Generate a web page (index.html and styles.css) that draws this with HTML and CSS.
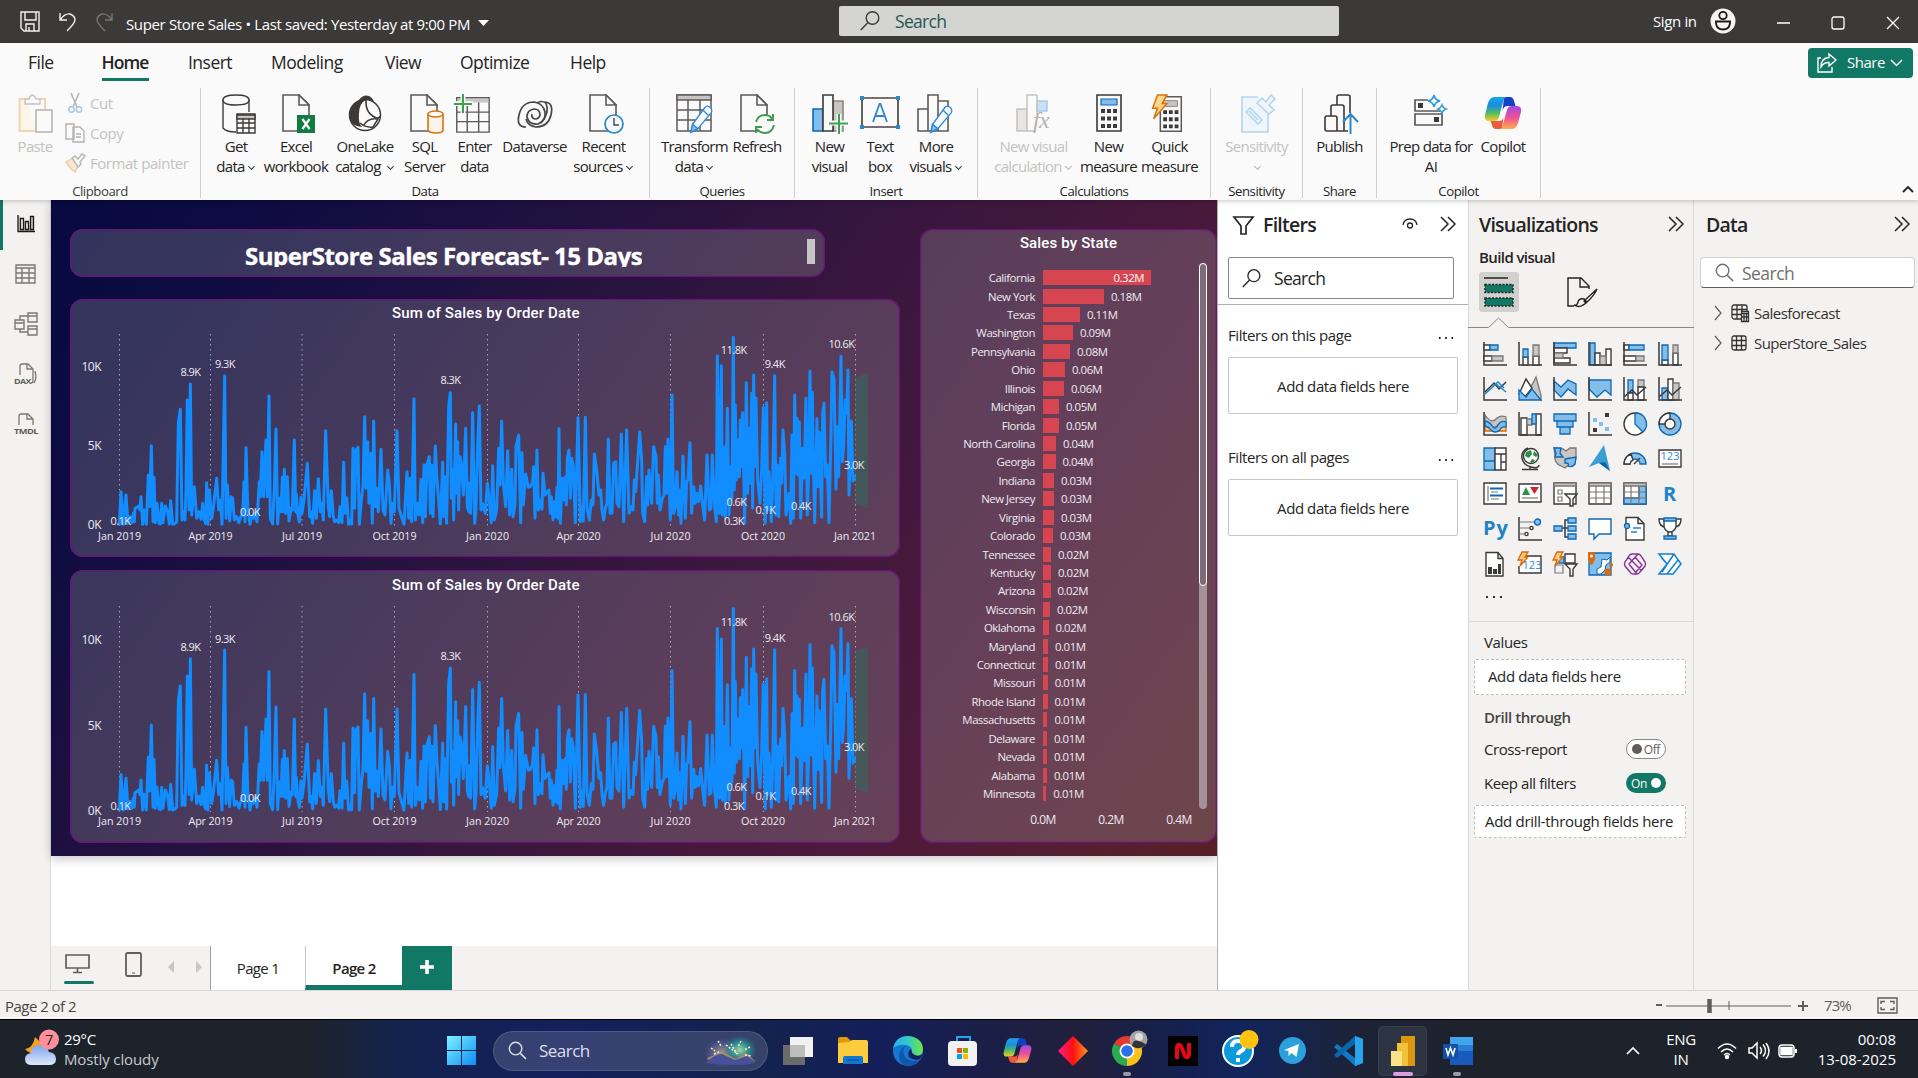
FILE: index.html
```html
<!DOCTYPE html>
<html lang="en">
<head>
<meta charset="utf-8">
<title>Super Store Sales</title>
<link rel="stylesheet" href="styles.css">
</head>
<body>
<svg class="defs" width="0" height="0">
  <defs>
    <linearGradient id="cp1" x1="0" y1="0" x2="0" y2="1"><stop offset="0" stop-color="#1ba3f0"/><stop offset=".35" stop-color="#1a8de0"/><stop offset=".65" stop-color="#4bb96a"/><stop offset="1" stop-color="#f2cf1d"/></linearGradient>
    <linearGradient id="cp2" x1="0" y1="0" x2="0" y2="1"><stop offset="0" stop-color="#a04be0"/><stop offset=".5" stop-color="#ee5096"/><stop offset="1" stop-color="#ffac4a"/></linearGradient>
    <symbol id="copilot" viewBox="0 0 38 34">
      <path d="M20 1h6q3 0 4 4l1.500 5h-8q-4 0-5 5z" fill="#1340c8"/>
      <path d="M18 33h-6q-3 0-4-4l-1.500-4h9q3 0 4-4z" fill="#f0593a"/>
      <path d="M10 1h13q-3 0-4 5l-4 15q-1 4-5 4H5q-5 0-4-6L4 7q2-6 6-6z" fill="url(#cp1)"/>
      <path d="M28 33H15q3 0 4-5l4-14q1-4 5-4h5q5 0 4 6l-3 11q-2 6-6 6z" fill="url(#cp2)"/>
    </symbol>
    <symbol id="page" viewBox="0 0 28 38"><path d="M1 1h16l10 10v26H1z" fill="#fafafa" stroke="#5d5b59" stroke-width="1.600"/><path d="M17 1v10h10z" fill="#fafafa" stroke="#5d5b59" stroke-width="1.600"/></symbol>
    <symbol id="dbl" viewBox="0 0 16 16"><path d="M1 1l7 7-7 7M8 1l7 7-7 7" fill="none" stroke="#252423" stroke-width="1.500"/></symbol>
    <symbol id="lens" viewBox="0 0 20 20"><circle cx="12.500" cy="7" r="6.300" fill="none" stroke="currentColor" stroke-width="1.400"/><path d="M8 11.500L.8 19" stroke="currentColor" stroke-width="1.400"/></symbol>
    <symbol id="lensr" viewBox="0 0 20 20"><circle cx="8" cy="8" r="6.600" fill="none" stroke="currentColor" stroke-width="1.500"/><path d="M13 13l6 6" stroke="currentColor" stroke-width="1.700"/></symbol>
    <symbol id="pencil" viewBox="0 0 26 34"><path d="M2 32l2-9L18 4q3-3 6 0t1 6L10 28z" fill="#fafafa" stroke="#2b88d8" stroke-width="1.500"/><path d="M2 32l2-9 6 5z" fill="#83bdea" stroke="#2b88d8"/><path d="M16 7l6 6" stroke="#2b88d8" stroke-width="1.500"/></symbol>
    <symbol id="dots" viewBox="0 0 18 4"><circle cx="2" cy="2" r="1.100"/><circle cx="9" cy="2" r="1.100"/><circle cx="16" cy="2" r="1.100"/></symbol>
    <polyline id="sales" points="358,973 363,875 370,973 378,885 384,970 390,950 396,968 400,940 403,965 405,925 411,922 416,918 420,930 423,890 428,973 432,930 439,973 445,826 449,920 454,737 459,965 462,832 466,968 471,910 477,970 481,972 485,910 489,968 496,918 503,935 508,972 512,902 518,973 525,970 530,965 535,670 541,628 546,960 550,935 555,960 558,870 562,600 567,930 571,552 575,945 583,860 590,955 597,935 603,958 608,910 613,960 617,970 620,848 624,973 628,870 635,955 640,925 650,835 656,930 662,900 666,973 674,528 678,955 682,855 689,963 694,890 698,895 703,960 710,950 717,968 722,950 728,945 732,845 735,965 738,743 743,920 750,973 754,950 760,955 765,940 771,965 778,845 781,890 786,755 791,890 798,720 802,890 807,588 811,955 818,972 823,865 828,687 833,972 838,895 843,935 847,832 849,935 853,808 857,940 862,830 867,963 873,925 877,930 883,720 887,935 889,882 893,940 898,966 903,892 906,940 912,900 922,790 929,950 933,935 938,970 944,872 949,955 955,836 961,935 965,910 970,960 977,692 985,920 989,950 994,872 1000,950 1004,965 1010,960 1016,968 1020,920 1026,968 1031,787 1035,940 1040,893 1046,973 1052,960 1055,972 1059,745 1064,925 1068,750 1074,742 1078,973 1084,900 1089,860 1094,650 1098,865 1103,725 1107,910 1113,760 1117,970 1121,663 1126,920 1130,865 1135,935 1138,870 1143,748 1149,930 1155,945 1163,810 1168,850 1173,970 1178,910 1183,935 1191,692 1197,925 1203,945 1212,973 1221,815 1226,955 1231,835 1235,965 1242,596 1246,960 1252,910 1258,945 1263,838 1268,968 1272,795 1276,950 1281,793 1288,770 1291,940 1295,795 1299,950 1306,738 1311,840 1316,900 1321,972 1328,787 1331,950 1334,830 1340,970 1346,620 1351,578 1354,895 1358,810 1361,960 1367,672 1369,880 1373,725 1376,930 1380,770 1385,795 1390,885 1397,685 1402,920 1406,935 1408,850 1412,940 1418,638 1424,970 1428,930 1433,735 1438,618 1443,930 1448,912 1456,940 1462,850 1468,900 1474,968 1478,797 1483,960 1490,930 1496,745 1500,855 1505,663 1510,850 1517,920 1523,752 1529,945 1535,808 1539,950 1545,915 1548,740 1556,705 1562,968 1566,758 1570,915 1577,822 1585,862 1591,860 1598,845 1601,800 1605,955 1611,750 1615,930 1621,900 1626,928 1629,820 1635,885 1642,875 1647,870 1651,940 1654,890 1659,960 1663,905 1667,950 1671,862 1674,955 1677,686 1681,970 1687,835 1692,900 1696,830 1699,915 1702,775 1707,750 1711,895 1715,775 1720,800 1726,968 1734,653 1741,965 1745,920 1750,963 1756,652 1761,925 1768,960 1774,900 1779,915 1783,762 1790,810 1797,885 1802,870 1806,930 1811,960 1816,925 1821,910 1825,717 1830,940 1836,940 1841,790 1847,785 1851,910 1857,920 1864,702 1871,965 1880,690 1887,940 1893,920 1899,930 1903,840 1907,875 1919,696 1925,780 1928,940 1934,965 1940,830 1943,915 1947,810 1955,910 1961,740 1968,770 1972,910 1975,825 1980,930 1987,895 1992,885 1996,740 2000,880 2004,717 2011,960 2016,585 2021,940 2026,920 2031,815 2036,945 2039,870 2043,970 2049,768 2056,955 2060,845 2064,840 2070,728 2075,940 2081,860 2086,910 2090,880 2096,905 2102,858 2108,915 2114,960 2121,765 2128,930 2133,925 2137,765 2143,910 2149,965 2152,468 2158,940 2164,497 2167,945 2171,740 2176,955 2182,625 2187,945 2192,800 2196,895 2200,412 2203,870 2206,615 2209,840 2214,720 2218,830 2221,660 2224,800 2228,638 2234,970 2239,548 2243,880 2248,685 2251,850 2255,580 2258,925 2261,525 2264,800 2268,595 2273,840 2280,910 2285,810 2290,622 2296,970 2300,608 2303,930 2307,815 2311,880 2314,965 2318,850 2324,527 2328,945 2332,795 2336,950 2342,775 2345,850 2349,690 2354,760 2358,945 2363,910 2367,880 2372,970 2376,705 2380,955 2384,585 2388,820 2391,655 2394,825 2398,665 2402,955 2408,745 2412,835 2418,595 2422,945 2426,820 2430,513 2434,820 2437,577 2440,780 2444,968 2451,656 2454,860 2458,697 2465,952 2468,640 2472,610 2477,830 2482,795 2487,968 2493,700 2496,516 2502,535 2508,868 2512,680 2516,830 2523,469 2527,785 2531,740 2535,600 2540,640 2544,510 2547,885 2554,663 2559,843 2564,830"/>
  </defs>
</svg>

<header class="titlebar">
  <svg class="tb-icons" width="104" height="22" viewBox="0 0 104 22" fill="none" stroke="#f3f2f1" stroke-width="1.400">
    <path d="M1 1h18v19H4l-3-3zM5 1v8h11V1M6 20v-7h8v7M9 20v-4"/>
    <path d="M40 2v7h7M40 9q5-7 10-6 5 2 5 6 0 3-8 11"/>
    <path d="M92 2v7h-7M92 9q-5-7-10-6-5 2-5 6 0 3 8 11" stroke="#777573"/>
  </svg>
  <span class="doc">Super Store Sales&nbsp;•&nbsp;Last saved: Yesterday at 9:00 PM</span>
  <svg class="caret" width="11" height="6" viewBox="0 0 11 6"><path d="M0 0h11L5.500 6z" fill="#fff"/></svg>
  <div class="top-search"><svg width="20" height="20"><use href="#lens"/></svg><span>Search</span></div>
  <span class="signin">Sign in</span>
  <svg class="avatar" width="26" height="26" viewBox="0 0 26 26"><circle cx="13" cy="13" r="12.500" fill="#f6f5f4"/><g fill="none" stroke="#1b1a19" stroke-width="1.800"><circle cx="13" cy="7.500" r="3.700"/><path d="M6 13.500h14v2q-1 6-7 6t-7-6z"/></g></svg>
  <svg class="win" width="124" height="14" viewBox="0 0 124 14" fill="none" stroke="#fff" stroke-width="1.300"><path d="M0 7h13M110 1l12 12M122 1l-12 12"/><rect x="55" y="1" width="12" height="12" rx="2"/></svg>
</header>

<section class="ribbon">
  <nav class="menu">
    <a class="m1">File</a><a class="m2 on">Home</a><a class="m3">Insert</a><a class="m4">Modeling</a><a class="m5">View</a><a class="m6">Optimize</a><a class="m7">Help</a>
    <button class="share"><svg width="20" height="20" viewBox="0 0 20 20" fill="none" stroke="#fff" stroke-width="1.400"><path d="M4 5H1v14h14v-5M12 1l7 6-7 6V9.500Q7 9 4 14q0-9 8-9.500z"/></svg><span>Share</span><svg width="13" height="8" viewBox="0 0 13 8"><path d="M1 1l5.500 5.500L12 1" fill="none" stroke="#fff" stroke-width="1.500"/></svg></button>
  </nav>
  <div class="groups">
    <div class="grp g-clip dis">
      <div class="btns">
        <div class="btn paste"><svg width="35" height="40" viewBox="0 0 35 40"><path d="M9 5H1.500v32h16" fill="#fdf5e8" stroke="#f0d5ae" stroke-width="2"/><path d="M22 5h5v10" fill="none" stroke="#f0d5ae" stroke-width="2"/><path d="M7 10V5h4q3-8 7 0h4v5z" fill="#fafafa" stroke="#c4c2c0" stroke-width="1.400"/><path d="M18 16h16v22H18z" fill="#fafafa" stroke="#b5b3b1" stroke-width="1.600"/></svg><span>Paste</span></div>
        <div class="mini">
          <div><svg width="20" height="20" viewBox="0 0 20 20" fill="none" stroke-width="1.500"><path d="M6 0l6 14M14 0L8 14" stroke="#b5b3b1"/><circle cx="6.500" cy="16.500" r="2.700" stroke="#a4cbe6"/><circle cx="14" cy="16.500" r="2.700" stroke="#a4cbe6"/></svg>Cut</div>
          <div><svg width="20" height="20" viewBox="0 0 20 20" fill="#fafafa" stroke="#b5b3b1" stroke-width="1.400"><path d="M1 1h8v15H1zM8 4h7l4 4v11H8z"/><path d="M11 11h5M11 14h5"/></svg>Copy</div>
          <div><svg width="20" height="20" viewBox="0 0 20 20" stroke-width="1.400"><path d="M1 9l7-4 6 6-4 8q-5-3-9-10z" fill="#fbe5cd" stroke="#eccaa5"/><path d="M7 5l3-2 3 3 4-5 3 2-5 6 1 2-3 3z" fill="#fafafa" stroke="#b5b3b1"/></svg>Format painter</div>
        </div>
      </div>
      <b>Clipboard</b>
    </div>
    <div class="grp g-data">
      <div class="btns">
        <div class="btn w64 shift"><svg width="34" height="40" viewBox="0 0 34 40" fill="#fafafa" stroke="#3b3a38" stroke-width="1.400"><path d="M1 6v28q3 4 13 4M27 6v12" /><path d="M1 6q0-5 13-5t13 5-13 5T1 6z"/><path d="M15 20h18v19H15z"/><path d="M15 21h18v4H15z" fill="#c8c6c4"/><path d="M15 29h18M15 34h18M21 24v15M27 24v15"/></svg><span>Get<br>data<i></i></span></div>
        <div class="btn w56 shift"><svg width="34" height="40" viewBox="0 0 34 40"><use href="#page" width="28" height="38" x="0" y="0"/><rect x="15" y="21" width="18" height="18" fill="#107c41"/><path d="M20.500 25l7 10M27.500 25l-7 10" stroke="#fff" stroke-width="2.200"/></svg><span>Excel<br>workbook</span></div>
        <div class="btn w82"><svg width="36" height="40" viewBox="0 0 36 40"><circle cx="18" cy="21" r="15.500" fill="#fafafa" stroke="#3b3a38" stroke-width="1.500"/><path d="M12 6q4-6 10-4 4 2 5 6-4-3-8-2-7 3-7 14-1 9 3 13Q2 32 2 20 3 12 12 6z" fill="#3b3a38"/><path d="M19 6q-1 13 10 18 4 0 4-2M13 29q6 5 13 4l5-8q-10-2-15 7" fill="none" stroke="#3b3a38" stroke-width="1.500"/></svg><span>OneLake<br>catalog <i></i></span></div>
        <div class="btn w37 shift"><svg width="34" height="40" viewBox="0 0 34 40"><use href="#page" width="28" height="38" x="0" y="0"/><path d="M18 20v16q1 3 8 3t7-3V20" fill="#fdf3e8" stroke="#d67510" stroke-width="1.600"/><ellipse cx="25.500" cy="20" rx="7.500" ry="3" fill="#fff" stroke="#d67510" stroke-width="1.600"/></svg><span>SQL<br>Server</span></div>
        <div class="btn w63 back"><svg width="38" height="42" viewBox="0 0 38 42" fill="#fafafa" stroke="#5d5b59" stroke-width="1.500"><path d="M3 4h34v36H3z"/><path d="M4 5h32v4H4z" fill="#c8c6c4" stroke="none"/><path d="M3 19h34M3 29h34M14 9v31M26 9v31"/><path d="M0 10h20M9.500 0v20" stroke="#fafafa" stroke-width="5"/><path d="M0 10.500h19M9.500 0v20" stroke="#3ba350" stroke-width="2.200"/></svg><span>Enter<br>data</span></div>
        <div class="btn w57"><svg width="36" height="36" viewBox="0 0 36 40" fill="none" stroke="#484644" stroke-width="1.700"><path d="M9 33Q-1 33 2 21 5 8 17 8q9 1 11 10 1 9-7 12-9 1-11-7 0-7 7-8 6 0 6 6-1 4-5 4-4-1-3-5"/><path d="M27 8q10 0 7 13-3 12-15 12-8-1-10-8M20 9q4-3 9 0 4 10-5 20"/></svg><span>Dataverse</span></div>
        <div class="btn w81 shift"><svg width="35" height="40" viewBox="0 0 35 40"><use href="#page" width="28" height="38" x="0" y="0"/><circle cx="25" cy="30" r="9" fill="#f3f9fd" stroke="#2b88c8" stroke-width="1.700"/><path d="M25 24v7h5" fill="none" stroke="#484644" stroke-width="1.400"/></svg><span>Recent<br>sources<i></i></span></div>
      </div><b>Data</b>
    </div>
    <div class="grp g-query">
      <div class="btns">
        <div class="btn w77"><svg width="38" height="40" viewBox="0 0 38 40" fill="#fafafa" stroke="#5d5b59" stroke-width="1.500"><path d="M1 1h34v36H1z"/><path d="M1 1h34v5H1z" fill="#c8c6c4"/><path d="M1 16h34M1 26h34M12 6v31M24 6v31"/><use href="#pencil" x="11" y="10" width="27" height="30"/></svg><span>Transform<br>data<i></i></span></div>
        <div class="btn w48"><svg width="35" height="40" viewBox="0 0 35 40"><use href="#page" width="28" height="38" x="0" y="0"/><circle cx="25" cy="30" r="9.500" fill="#fafafa"/><path d="M16 28q2-7 9-7 5 0 7 4M34 31q-2 8-9 8-5 0-8-4M33 20v6h-6M16 39v-6h6" fill="none" stroke="#3f9a52" stroke-width="1.900"/></svg><span>Refresh</span></div>
      </div><b>Queries</b>
    </div>
    <div class="grp g-insert">
      <div class="btns">
        <div class="btn w57"><svg width="36" height="40" viewBox="0 0 36 40" stroke-width="1.600"><path d="M1 15h10v22H1z" fill="#83bdea" stroke="#1068b3"/><path d="M21 7h10v30H21z" fill="#c8c6c4" stroke="#8a8886"/><path d="M11 1h10v36H11z" fill="#fafafa" stroke="#3b3a38"/><path d="M17 29h19M27 20v20" stroke="#fafafa" stroke-width="5"/><path d="M17 29.500h19M27 20v20" stroke="#3ba350" stroke-width="2"/></svg><span>New<br>visual</span></div>
        <div class="btn w44"><svg width="40" height="40" viewBox="0 0 40 40"><path d="M2 4h36v29H2z" fill="#fafafa" stroke="#484644" stroke-width="1.700"/><path d="M13 28l6.500-18h1L27 28M15 22h10" fill="none" stroke="#2b88d8" stroke-width="1.800"/><path d="M0 2h4v4H0zM36 2h4v4h-4zM0 31h4v4H0zM36 31h4v4h-4z" fill="#2b88c8"/></svg><span>Text<br>box</span></div>
        <div class="btn w68"><svg width="38" height="40" viewBox="0 0 38 40" fill="#fafafa" stroke="#5d5b59" stroke-width="1.600"><path d="M1 15h10v22H1zM21 7h10v30H21zM11 1h10v36H11z"/><use href="#pencil" x="10" y="10" width="27" height="30"/></svg><span>More<br>visuals<i></i></span></div>
      </div><b>Insert</b>
    </div>
    <div class="grp g-calc">
      <div class="btns">
        <div class="btn w88 dis"><svg width="36" height="40" viewBox="0 0 36 40" stroke="#c4c2c0" stroke-width="1.500"><path d="M1 15h10v22H1z" fill="#e8e6e4"/><path d="M21 7h10v10H21z" fill="#c8e2f5" stroke="#a4cbe6"/><path d="M21 1H11v36h8" fill="#fafafa"/><path d="M21 1v20" /><text x="17" y="34" class="fx">fx</text></svg><span>New visual<br>calculation<i></i></span></div>
        <div class="btn w62"><svg width="26" height="40" viewBox="0 0 26 40"><path d="M1 1h24v36H1z" fill="#fafafa" stroke="#3b3a38" stroke-width="1.600"/><path d="M5 5h16v6H5z" fill="#83bdea" stroke="#1068b3" stroke-width="1.200"/><path d="M5 17h16M5 24.500h16M5 32h16" stroke="#3b3a38" stroke-width="4" stroke-dasharray="4 2"/></svg><span>New<br>measure</span></div>
        <div class="btn w60 back"><svg width="34" height="42" viewBox="0 0 34 42"><path d="M10 3h22v36H10z" fill="#fafafa" stroke="#5d5b59" stroke-width="1.600"/><path d="M13 7h15v6H13z" fill="#c8c6c4" stroke="#8a8886"/><path d="M13 19h16M13 26.500h16M13 34h16" stroke="#3b3a38" stroke-width="4" stroke-dasharray="4 2"/><path d="M7 1h10l-5 9h5L3 26l4-11H2z" fill="#fcd68a" stroke="#d67510" stroke-width="1.600"/></svg><span>Quick<br>measure</span></div>
      </div><b>Calculations</b>
    </div>
    <div class="grp g-sens">
      <div class="btns"><div class="btn dis shift"><svg width="35" height="40" viewBox="0 0 35 40" fill="#eef6fb" stroke="#b4d6ea" stroke-width="1.600"><path d="M27 12v26H1V3h16"/><path d="M5 18l4-4 12 12-4 4z"/><path d="M8 17l9 9" /><path d="M16 9l5-5 4 4 5-7 4 4-6 6 5 5-5 4z"/></svg><span>Sensitivity<br><i></i></span></div></div><b>Sensitivity</b>
    </div>
    <div class="grp g-share">
      <div class="btns"><div class="btn shift"><svg width="35" height="40" viewBox="0 0 35 40" fill="#fafafa" stroke="#3b3a38" stroke-width="1.600"><path d="M13 11V3q0-2 2-2h9q2 0 2 2v16M7 22v-9q0-2 2-2h9q2 0 2 2v24M24 37H3q-2 0-2-2V24q0-2 2-2h8q2 0 2 2v13"/><path d="M26.500 40V20M19 28l7.500-8 7.500 8" fill="none" stroke="#2b88c8" stroke-width="2"/></svg><span>Publish</span></div></div><b>Share</b>
    </div>
    <div class="grp g-cop">
      <div class="btns">
        <div class="btn w96"><svg width="34" height="40" viewBox="0 0 34 40" fill="#fafafa" stroke="#5d5b59" stroke-width="1.700"><path d="M14 6H1v11h25M1 20h27v11H1z"/><path d="M4 9h5v5H4zM20 23h5v5h-5z" fill="#3b3a38" stroke="none"/><path d="M20 1q1 5 6 6-5 1-6 6-1-5-6-6 5-1 6-6zM28 11q1 3 4 4-3 1-4 4-1-3-4-4 3-1 4-4z" stroke="#2b9ad8" stroke-width="1.500"/></svg><span>Prep data for<br>AI</span></div>
        <div class="btn w48"><svg width="40" height="40" viewBox="0 0 40 40"><use href="#copilot" x="1" y="1" width="38" height="36"/></svg><span>Copilot</span></div>
      </div><b>Copilot</b>
    </div>
    <svg class="collapse" width="12" height="8" viewBox="0 0 12 8"><path d="M1 7l5-5 5 5" fill="none" stroke="#252423" stroke-width="1.900"/></svg>
  </div>
</section>

<main class="work">
  <aside class="rail">
    <div class="on"><svg width="18" height="18" viewBox="0 0 18 18" fill="#c8c6c4" stroke="#1b1a19" stroke-width="1.300"><path d="M1 0v16.500h17M3.500 3.500h3v11h-3zM8.500 6.500h3v8h-3zM13.500 1.500h3v13h-3z"/></svg></div>
    <div><svg width="21" height="21" viewBox="0 0 21 21" fill="none" stroke="#7a7876" stroke-width="1.400"><path d="M1 1h19v18H1zM1 4h19M1 9h19M1 14h19M7 4v15M14 4v15"/></svg></div>
    <div><svg width="24" height="24" viewBox="0 0 24 24" fill="none" stroke="#7a7876" stroke-width="1.400"><path d="M1 8h9v9H1zM1 11h9M14 1h9v9h-9zM14 4h9M14 14h9v9h-9zM14 17h9M6 8V4h8M6 17v3h8"/></svg></div>
    <div><svg width="24" height="24" viewBox="0 0 24 24" fill="none" stroke="#7a7876" stroke-width="1.300"><path d="M6 13V4q0-2 2-2h6l5 5v12q0 2-2 2M13 2v5h6M21 9q2 8-1 12"/><text x="0" y="22" class="railtxt" textLength="17" lengthAdjust="spacingAndGlyphs">DAX</text></svg></div>
    <div><svg width="24" height="24" viewBox="0 0 24 24" fill="none" stroke="#7a7876" stroke-width="1.300"><path d="M5 13V4q0-2 2-2h7l5 5v6M13 2v5h6"/><text x="0" y="22" class="railtxt" textLength="24" lengthAdjust="spacingAndGlyphs">TMDL</text></svg></div>
  </aside>

  <section class="stage">
    <div class="report">
      <div class="left">
        <div class="visual heading"><h1>SuperStore Sales Forecast- 15 Days</h1><span class="thumb"></span></div>
        <div class="visual line1">
          <svg width="829" height="258" viewBox="70 299 829 258">
            <text class="vt" x="485.500" y="318" textLength="187">Sum of Sales by Order Date</text>
            <path class="gl" d="M119.500 334v193M210.500 334v193M302 334v193M394.500 334v193M487.500 334v193M578.500 334v193M670.500 334v193M763.500 334v193M855.500 334v193"/>
            <path class="fc" d="M855 377.500l13.300-4.500v135.300l-13.300-4z"/>
            <use class="ln" href="#sales" transform="translate(0 200) scale(.33333)"/>
            <g class="ax end"><text x="101" y="371">10K</text><text x="101" y="450">5K</text><text x="101" y="529">0K</text></g>
            <g class="tk"><text x="119.500" y="540" textLength="43">Jan 2019</text><text x="210.500" y="540" textLength="44">Apr 2019</text><text x="302" y="540" textLength="40">Jul 2019</text><text x="394.500" y="540" textLength="44">Oct 2019</text><text x="487.500" y="540" textLength="43">Jan 2020</text><text x="578.500" y="540" textLength="44">Apr 2020</text><text x="670.500" y="540" textLength="40">Jul 2020</text><text x="763" y="540" textLength="44">Oct 2020</text><text x="855" y="540" textLength="42">Jan 2021</text></g>
            <g class="dl"><text x="190.500" y="376">8.9K</text><text x="225" y="368">9.3K</text><text x="450.500" y="384">8.3K</text><text x="733.700" y="354">11.8K</text><text x="774.800" y="368">9.4K</text><text x="841.500" y="348">10.6K</text><text x="854" y="469">3.0K</text><text x="736.500" y="506">0.6K</text><text x="765.500" y="514">0.1K</text><text x="801" y="510">0.4K</text><text x="734" y="525">0.3K</text><text x="250" y="516">0.0K</text><text x="120.500" y="525">0.1K</text></g>
          </svg>
        </div>
        <div class="visual line2">
          <svg width="829" height="272" viewBox="70 570 829 272">
            <text class="vt" x="485.500" y="590" textLength="187">Sum of Sales by Order Date</text>
            <path class="gl" d="M119.500 606v206M210.500 606v206M302 606v206M394.500 606v206M487.500 606v206M578.500 606v206M670.500 606v206M763.500 606v206M855.500 606v206"/>
            <path class="fc" d="M855 651l13.300-4v146l-13.300-4z"/>
            <use class="ln" href="#sales" transform="translate(0 460.600) scale(.33333 .359)"/>
            <g class="ax end"><text x="101" y="644">10K</text><text x="101" y="730">5K</text><text x="101" y="814.500">0K</text></g>
            <g class="tk"><text x="119.500" y="825" textLength="43">Jan 2019</text><text x="210.500" y="825" textLength="44">Apr 2019</text><text x="302" y="825" textLength="40">Jul 2019</text><text x="394.500" y="825" textLength="44">Oct 2019</text><text x="487.500" y="825" textLength="43">Jan 2020</text><text x="578.500" y="825" textLength="44">Apr 2020</text><text x="670.500" y="825" textLength="40">Jul 2020</text><text x="763" y="825" textLength="44">Oct 2020</text><text x="855" y="825" textLength="42">Jan 2021</text></g>
            <g class="dl"><text x="190.500" y="650.500">8.9K</text><text x="225" y="642.500">9.3K</text><text x="450.500" y="659.500">8.3K</text><text x="733.700" y="625.500">11.8K</text><text x="774.800" y="641.500">9.4K</text><text x="841.500" y="621">10.6K</text><text x="854" y="751">3.0K</text><text x="736.500" y="790.500">0.6K</text><text x="765.500" y="799.500">0.1K</text><text x="801" y="795">0.4K</text><text x="734" y="809.500">0.3K</text><text x="250" y="801.500">0.0K</text><text x="120.500" y="809.500">0.1K</text></g>
          </svg>
        </div>
      </div>
      <div class="visual states">
        <h2>Sales by State</h2>
        <div class="rows">
          <div><span>California</span><s style="width:108px"><em>0.32M</em></s></div>
          <div><span>New York</span><s style="width:61px"></s><em>0.18M</em></div>
          <div><span>Texas</span><s style="width:37px"></s><em>0.11M</em></div>
          <div><span>Washington</span><s style="width:30px"></s><em>0.09M</em></div>
          <div><span>Pennsylvania</span><s style="width:27px"></s><em>0.08M</em></div>
          <div><span>Ohio</span><s style="width:22px"></s><em>0.06M</em></div>
          <div><span>Illinois</span><s style="width:21px"></s><em>0.06M</em></div>
          <div><span>Michigan</span><s style="width:16px"></s><em>0.05M</em></div>
          <div><span>Florida</span><s style="width:16px"></s><em>0.05M</em></div>
          <div><span>North Carolina</span><s style="width:13px"></s><em>0.04M</em></div>
          <div><span>Georgia</span><s style="width:12.500px"></s><em>0.04M</em></div>
          <div><span>Indiana</span><s style="width:11px"></s><em>0.03M</em></div>
          <div><span>New Jersey</span><s style="width:11px"></s><em>0.03M</em></div>
          <div><span>Virginia</span><s style="width:11px"></s><em>0.03M</em></div>
          <div><span>Colorado</span><s style="width:10px"></s><em>0.03M</em></div>
          <div><span>Tennessee</span><s style="width:8px"></s><em>0.02M</em></div>
          <div><span>Kentucky</span><s style="width:8px"></s><em>0.02M</em></div>
          <div><span>Arizona</span><s style="width:7.500px"></s><em>0.02M</em></div>
          <div><span>Wisconsin</span><s style="width:7px"></s><em>0.02M</em></div>
          <div><span>Oklahoma</span><s style="width:5.500px"></s><em>0.02M</em></div>
          <div><span>Maryland</span><s style="width:5px"></s><em>0.01M</em></div>
          <div><span>Connecticut</span><s style="width:5px"></s><em>0.01M</em></div>
          <div><span>Missouri</span><s style="width:4.700px"></s><em>0.01M</em></div>
          <div><span>Rhode Island</span><s style="width:4.500px"></s><em>0.01M</em></div>
          <div><span>Massachusetts</span><s style="width:4.400px"></s><em>0.01M</em></div>
          <div><span>Delaware</span><s style="width:4px"></s><em>0.01M</em></div>
          <div><span>Nevada</span><s style="width:4px"></s><em>0.01M</em></div>
          <div><span>Alabama</span><s style="width:4px"></s><em>0.01M</em></div>
          <div><span>Minnesota</span><s style="width:3.300px"></s><em>0.01M</em></div>
        </div>
        <div class="scale"><span>0.0M</span><span>0.2M</span><span>0.4M</span></div>
        <div class="sbar"><span></span></div>
      </div>
    </div>
    <div class="blank"></div>
  </section>

  <aside class="filters">
    <div class="ph"><svg class="fun" width="21" height="19" viewBox="0 0 21 19"><path d="M1 1h19l-7 9v8H8v-8z" fill="none" stroke="#252423" stroke-width="1.700"/></svg><h3>Filters</h3>
      <svg class="eye" width="16" height="12" viewBox="0 0 16 12" fill="none" stroke="#252423" stroke-width="1.300"><path d="M1 7q1-6 7-6t7 6"/><circle cx="8" cy="7.500" r="2.500"/></svg><svg class="chev" width="16" height="16"><use href="#dbl"/></svg></div>
    <div class="fsearch"><svg width="19" height="19"><use href="#lens"/></svg><span>Search</span></div>
    <div class="fsec"><p>Filters on this page<svg width="16" height="4"><use href="#dots"/></svg></p><div class="drop">Add data fields here</div></div>
    <div class="fsec two"><p>Filters on all pages<svg width="16" height="4"><use href="#dots"/></svg></p><div class="drop">Add data fields here</div></div>
  </aside>

  <aside class="viz">
    <div class="ph"><h3>Visualizations</h3><svg class="chev" width="16" height="16"><use href="#dbl"/></svg></div>
    <h4>Build visual</h4>
    <div class="modes">
      <span class="sel"><svg width="30" height="31" viewBox="0 0 30 31"><path d="M0 1h24" stroke="#252423" stroke-width="1.500"/><path d="M1 7.500h28v8H1zM1 21h28v8H1z" fill="#117865" stroke="#252423" stroke-width="1.500" stroke-dasharray="2 1.500"/></svg></span>
      <svg class="brush" width="31" height="31" viewBox="0 0 31 31" fill="none" stroke="#252423" stroke-width="1.400"><path d="M7 29H1V1h13l8 8v3M13 1v9h9"/><path d="M30 12L17 24l2 2q8-7 11-14zM17 22q-5-1-6 3t-4 3q5 3 9 0 4-2 3-4z"/></svg>
    </div>
    <svg class="notch" width="226" height="11" viewBox="0 0 226 11"><path d="M0 10.500h20.500L30.500 1l10 9.500H226" fill="none" stroke="#8a8886"/></svg>
    <div class="vgrid">
      <svg viewBox="0 0 24 24"><path class="ln0" d="M1 0v23h23"/><path class="w" d="M1 3h6v5H1zM1 14h8v5H1z"/><path class="b" d="M7 3h8v5H7z"/><path class="g" d="M9 14h11v5H9z"/></svg>
      <svg viewBox="0 0 24 24"><path class="ln0" d="M1 0v23h23"/><path class="w" d="M5 15h5v8H5zM15 14h6v9h-6z"/><path class="b" d="M5 7h5v8H5z"/><path class="g" d="M15 3h6v11h-6z"/></svg>
      <svg viewBox="0 0 24 24"><path class="b" d="M1 1h22v5H1z"/><path class="w" d="M1 6h13v5H1zM1 16h16v5H1z"/><path class="g" d="M1 11h9v5H1z"/><path class="ln0" d="M1 0v23h23"/></svg>
      <svg viewBox="0 0 24 24"><path class="b" d="M2 1h5v22H2z"/><path class="w" d="M7 11h5v12H7zM18 7h5v16h-5z"/><path class="g" d="M12 14h6v9h-6z"/><path class="ln0" d="M1 0v23h23"/></svg>
      <svg viewBox="0 0 24 24"><path class="w" d="M1 3h5v5H1zM1 14h12v5H1z"/><path class="b" d="M6 3h15v5H6z"/><path class="g" d="M13 14h8v5h-8z"/><path class="ln0" d="M1 0v23h23"/></svg>
      <svg viewBox="0 0 24 24"><path class="w" d="M4 18h6v5H4zM15 11h5v12h-5z"/><path class="b" d="M4 3h6v15H4z"/><path class="g" d="M15 3h5v8h-5z"/><path class="ln0" d="M1 0v23h23"/></svg>

      <svg viewBox="0 0 24 24"><path class="ln0" d="M1 0v23h23M2 15l9-9 5 6 7-7"/><path class="bl" d="M2 17l11-10 5 4 5 4M10 9l5-4 6 6"/></svg>
      <svg viewBox="0 0 24 24"><path class="g" d="M12 12l6-12 5 18v5z"/><path class="w" d="M1 17L8 2l6 9-8 10z"/><path class="b" d="M1 13l7 7 6-8 9 11H1z"/></svg>
      <svg viewBox="0 0 24 24"><path class="b" d="M1 4l7 6 7-7 8 4v11l-8-6-7 8-7-7z"/><path class="ln0" d="M1 0v23h23"/></svg>
      <svg viewBox="0 0 24 24"><path class="b" d="M1 3h22v15l-6-5-8 7-8-8z"/><path class="ln0" d="M1 0v23h23"/></svg>
      <svg viewBox="0 0 24 24"><path class="b" d="M5 3h5v13H5z"/><path class="g" d="M15 3h6v7h-6z"/><path class="w" d="M5 16h5v7H5zM15 10h6v13h-6z"/><path class="ln0" d="M1 0v23h23M1 20l8-7 5 5 9-8"/></svg>
      <svg viewBox="0 0 24 24"><path class="b" d="M4 11h6v12H4z"/><path class="w" d="M10 2h5v21h-5z"/><path class="g" d="M15 6h6v17h-6z"/><path class="ln0" d="M1 0v23h23M1 20l8-7 5 5 9-8"/></svg>

      <svg viewBox="0 0 24 24"><path class="o" d="M2 12h21v7H2z"/><path class="g" d="M2 3q7 10 12 3 4-3 9-1v6q-7-1-9 3-7 4-12-3z"/><path class="b" d="M2 9q5 1 8 6 3 3 5-2 3-5 8-3v5q-5-1-6 3-5 4-9 0-2-3-6-4z"/><path class="ln0" d="M1 0v23h23"/></svg>
      <svg viewBox="0 0 24 24"><path class="w" d="M3 6h6v17H3zM18 2h5v21h-5z"/><path class="g" d="M9 7h5v6H9z"/><path class="b" d="M14 2h4v10h-4z"/><path class="ln0" d="M1 0v23h23"/></svg>
      <svg viewBox="0 0 24 24"><path class="b" d="M1 2h22v7H1zM4 9h16v6H4zM7 15h10v7H7z"/></svg>
      <svg viewBox="0 0 24 24"><path class="ln0" d="M1 0v23h23"/><path d="M17 1h4v4h-4zM5 16h4v4H5z" fill="#3b3a38"/><path d="M5 6h4v4H5zM11 10h4v4h-4zM17 15h4v4h-4z" fill="#83bdea"/></svg>
      <svg viewBox="0 0 24 24"><circle class="w" cx="12" cy="12" r="11"/><path class="b" d="M12 1a11 11 0 0 1 8 19l-8-8z"/></svg>
      <svg viewBox="0 0 24 24"><circle class="b" cx="12" cy="12" r="11"/><circle class="w" cx="12" cy="12" r="5"/><path class="w" d="M1 12A11 11 0 0 1 12 1v6a5 5 0 0 0-5 5z"/></svg>

      <svg viewBox="0 0 24 24"><path class="b" d="M1 1h11v13H1zM1 14h11v9H1z"/><path class="w" d="M12 1h11v6H12zM12 7h6v16h-6zM18 7h5v8h-5zM18 15h5v8h-5z"/></svg>
      <svg viewBox="0 0 24 24"><path class="ln0" d="M10 1q-7 3-6 10t9 9 8-2M4 22.500h16M12 20v3"/><circle class="w" cx="13" cy="9" r="7.500"/><path d="M8 5l5-2 1 4-3 4-4-2zM16 4l4 4-2 2-3-2zM14 12l3 1-2 3-3-1z" fill="#2d9145"/></svg>
      <svg viewBox="0 0 24 24"><path class="g" d="M1 1l9 1 3 2 4-3h6v9l-1 7-8 2-2 2-4-2q-7-3-6-10z"/><path class="b" d="M1 1h7l-1 5 3 4H2l1-4zM12 12l11-2-1 7q-3 4-7 2 2-3-3-3z"/></svg>
      <svg viewBox="0 0 24 24"><path d="M16-2L1 20l10-4 11 8z" fill="#3a9fd0"/><path d="M11 16l11 8-5-9z" fill="#0f5fa8"/></svg>
      <svg viewBox="0 0 24 24"><path class="b" d="M1 17a11 11 0 0 1 22 0h-6a5 5 0 0 0-10 0z"/><path class="w" d="M1 17a11 11 0 0 1 7-10l2 6a5 5 0 0 0-3 4z"/><path class="ln0" d="M11 17l6-6"/></svg>
      <svg viewBox="0 0 24 24"><path class="w" d="M1 3h22v17H1z"/><path class="gl0" d="M4 17h16"/><text x="12" y="13" class="n123">123</text></svg>

      <svg viewBox="0 0 24 24"><path class="w" d="M1 1h22v21H1z"/><path class="gl0" d="M5 4v15M8 10h7M8 17h8"/><path d="M7 6.500h13M7 13.500h13" stroke="#1068b3" stroke-width="2"/></svg>
      <svg viewBox="0 0 24 24"><path class="w" d="M1 2h22v18H1z"/><path d="M4 13l4-8 4 8z" fill="#2d9145"/><path d="M12 5h9l-4.500 7z" fill="#c8282e"/><path class="gl0" d="M4 16h16"/></svg>
      <svg viewBox="0 0 24 24"><path class="w" d="M1 1h22v21H1z"/><path class="g" d="M1 1h22v3H1z"/><path class="gl0" d="M5 8h4v4H5zM5 15h4v4H5z"/><path class="w" d="M12 12h12l-4 5v7h-3v-7z"/></svg>
      <svg viewBox="0 0 24 24"><path class="w" d="M1 1h22v21H1z"/><path class="g" d="M1 1h22v3H1z"/><path class="gl0" d="M1 10h22M1 16h22M8 4v18M16 4v18"/></svg>
      <svg viewBox="0 0 24 24"><path class="w" d="M1 1h22v21H1z"/><path class="b" d="M16 4h7v18H1v-6h15z"/><path class="g" d="M1 1h22v3H1z"/><path class="gl0" d="M1 10h22M1 16h22M8 4v18M16 4v18"/></svg>
      <svg viewBox="0 0 24 24"><text x="11" y="19" class="rt">R</text></svg>

      <svg viewBox="0 0 24 24"><text x="12" y="18" class="rt" textLength="24">Py</text></svg>
      <svg viewBox="0 0 24 24"><path class="ln0" d="M1 0v23h23"/><path class="gl0" d="M1 5h16M1 11h11M1 17h6"/><circle class="b" cx="19.500" cy="5" r="3"/><circle class="w" cx="13.500" cy="11" r="1.600"/><circle class="w" cx="8.500" cy="17" r="1.600"/></svg>
      <svg viewBox="0 0 24 24"><path class="ln0" d="M8 11h7M15 3h-3v17h3"/><path class="b" d="M1 9h8v5H1zM15 1h8v5h-8zM15 9h8v5h-8zM15 17h8v5h-8z"/></svg>
      <svg viewBox="0 0 24 24"><path d="M1 2h22v15H11l-5 5v-5H1z" fill="#fff" stroke="#1068b3" stroke-width="1.400"/></svg>
      <svg viewBox="0 0 24 24"><path class="w" d="M3 0.500h12l6 6V23H3zM15 .5v6h6"/><path class="bl" d="M10 11h8M8 15h6"/><circle class="b" cx="4" cy="9" r="2.500"/></svg>
      <svg viewBox="0 0 24 24"><path class="w" d="M6 2H1q0 8 7 8M18 2h5q0 8-7 8"/><path class="w" d="M6 2h12v8q-2 5-6 5t-6-5zM10 15h4v4h-4z"/><path class="b" d="M6 1h12v3H6zM6 19h12v3H6z"/></svg>

      <svg viewBox="0 0 24 24"><path class="w" d="M3 0.500h12l5 6V24H3zM15 .5v6h5"/><path d="M5 15h4v7H5zM10 17h4v5h-4zM15 12h3v10h-3z" fill="#3b3a38"/></svg>
      <svg viewBox="0 0 24 24"><path class="w" d="M7 4h16v17H1v-7"/><text x="14" y="17" class="n123">123</text><path class="o" d="M4 0h6L7 5h3l-8 9 2-6H0z"/></svg>
      <svg viewBox="0 0 24 24"><path class="w" d="M12 2h10v9H12z"/><path class="gl0" d="M2 13h8v8H2z"/><path class="b" d="M6 5h5v6H6z"/><path class="w" d="M12 12h12l-4 5v7h-3v-7z"/><path class="o" d="M4 0h6L7 5h3l-8 9 2-6H0z"/></svg>
      <svg viewBox="0 0 24 24"><path class="b" d="M1 1h22v22H1z"/><path d="M9 22v-5l4-2 1-8 5 1 3-3v5l-4 3-1 5-4 4z" fill="#fff" stroke="#1068b3"/><path d="M0 0h7v7q-1 4-3.500 6Q1 11 0 7z" fill="#d86a10"/><circle cx="3.500" cy="4" r="1.500" fill="#fff"/><circle cx="20" cy="20" r="3.500" fill="#d86a10"/><circle cx="23" cy="13" r="2" fill="#d86a10"/></svg>
      <svg viewBox="0 0 24 24" fill="none" stroke="#8a2f9a" stroke-width="1.400"><path d="M9 2h6q2 0 3 2l4 6q1 2 0 4l-5 6q-1 2-3 2h-4q-2 0-3-2l-5-6q-1-2 0-4l4-6q1-2 3-2zM15 2l-9 10 8 10M5 5l13 13M12 5l7 8-6 7"/></svg>
      <svg viewBox="0 0 24 24" fill="#fff" stroke="#1180d8" stroke-width="1.500"><path d="M1 2h15l7 10-8 10H1l8-10zM16 2L4 20M20 8L9 22M9 12L3 5"/></svg>
      <svg viewBox="0 0 24 24"><use href="#dots" x="2" y="8" width="18" height="4"/></svg>
    </div>
    <div class="wells">
      <p>Values</p>
      <div class="well">Add data fields here</div>
      <h5>Drill through</h5>
      <div class="tog">Cross-report<span class="off"><i></i>Off</span></div>
      <div class="tog k">Keep all filters<span class="ont">On<i></i></span></div>
      <div class="well d">Add drill-through fields here</div>
    </div>
  </aside>

  <aside class="data">
    <div class="ph"><h3>Data</h3><svg class="chev" width="16" height="16"><use href="#dbl"/></svg></div>
    <div class="dsearch"><svg width="19" height="19"><use href="#lensr"/></svg><span>Search</span></div>
    <div class="tbl"><svg width="8" height="14" viewBox="0 0 8 14"><path d="M1 0l6 7-6 7" fill="none" stroke="#605e5c" stroke-width="1.200"/></svg><svg width="19" height="19" viewBox="0 0 19 19" fill="none" stroke="#323130" stroke-width="1.300"><rect x="1" y="1" width="15" height="14" rx="2"/><path d="M1 5.500h15M1 10.500h9M6 1v14M11 1v6"/><path d="M10.500 7.500h7v10h-7z" fill="#f3f2f1"/><path d="M11 9.500h7M13 10v7M15.500 10v7M11 13h7" /></svg>Salesforecast</div>
    <div class="tbl"><svg width="8" height="14" viewBox="0 0 8 14"><path d="M1 0l6 7-6 7" fill="none" stroke="#605e5c" stroke-width="1.200"/></svg><svg width="19" height="19" viewBox="0 0 19 19" fill="none" stroke="#323130" stroke-width="1.300"><rect x="1" y="2" width="14" height="14" rx="2"/><path d="M1 6.500h14M1 11.500h14M5.500 2v14M10.500 2v14"/></svg>SuperStore_Sales</div>
  </aside>

  <div class="pages">
    <svg width="159" height="36" viewBox="0 0 159 36"><path d="M15 9h23v13H15zM26.500 22v4M22 26.500h9" fill="none" stroke="#605e5c" stroke-width="1.700"/><rect x="13" y="35" width="30" height="3" rx="1.500" fill="#117865"/><rect x="75" y="7" width="15" height="23" rx="1.500" fill="none" stroke="#605e5c" stroke-width="1.800"/><path d="M81 27h3" stroke="#605e5c"/><path d="M123 15v12l-6-6zM145 15v12l6-6z" fill="#c8c6c4"/></svg>
    <span class="pg">Page 1</span><span class="pg cur">Page 2</span><span class="add"><svg width="14" height="14" viewBox="0 0 14 14"><path d="M7 0v14M0 7h14" stroke="#fff" stroke-width="3.600"/></svg></span>
  </div>
</main>

<footer class="status"><span>Page 2 of 2</span>
  <svg width="155" height="16" viewBox="0 0 155 16" fill="none" stroke="#605e5c"><path d="M1 7h6" stroke-width="2"/><path d="M11 8h125M74 3v9"/><path d="M54.500 1v14" stroke-width="4.500"/><path d="M143 8h10M148 3v10" stroke-width="2"/></svg>
  <span class="pct">73%</span>
  <svg class="fit" width="21" height="17" viewBox="0 0 21 17" fill="none" stroke="#605e5c" stroke-width="1.400"><path d="M1 1h19v15H1z"/><path d="M8 4.500H4V7M13 4.500h4V7M8 12.500H4V10M13 12.500h4V10"/></svg>
</footer>

<footer class="taskbar">
  <svg class="wx" width="34" height="40" viewBox="0 0 34 40"><defs><linearGradient id="cl" x1="0" y1="0" x2="0" y2="1"><stop offset="0" stop-color="#79a5ee"/><stop offset="1" stop-color="#dfe9fb"/></linearGradient></defs><path d="M10 8q4 4 8 7l-6 10q-8 0-12-5 8-1 10-12z" fill="#f2a01e"/><path d="M7 36q-7 0-7-6 0-5 6-6 1-8 9-8 7 0 9 7 7 1 7 7 0 6-7 6z" fill="url(#cl)"/><circle cx="24" cy="10.500" r="10" fill="#ff8f9b"/><text x="24" y="15.500" class="badge">7</text></svg>
  <div class="wtext"><span>29°C</span><span>Mostly cloudy</span></div>
  <svg class="start" width="29" height="29" viewBox="0 0 29 29"><defs><linearGradient id="wn" x1="0" y1="0" x2="1" y2="1"><stop offset="0" stop-color="#7df3ff"/><stop offset="1" stop-color="#0a8cf5"/></linearGradient></defs><path d="M0 0h14v14H0zM15 0h14v14H15zM0 15h14v14H0zM15 15h14v14H15z" fill="url(#wn)"/></svg>
  <div class="tsearch"><svg width="19" height="19"><use href="#lensr"/></svg><span>Search</span>
    <svg class="art" width="52" height="30" viewBox="0 0 52 30"><defs><radialGradient id="fa"><stop offset="0" stop-color="#a8a078"/><stop offset=".5" stop-color="#6a6a98" stop-opacity=".8"/><stop offset="1" stop-color="#4a55a0" stop-opacity="0"/></radialGradient><radialGradient id="fb"><stop offset="0" stop-color="#a5d8a0"/><stop offset=".5" stop-color="#2d9c98" stop-opacity=".8"/><stop offset="1" stop-color="#207a90" stop-opacity="0"/></radialGradient></defs><ellipse cx="17" cy="17" rx="18" ry="15" fill="url(#fa)"/><ellipse cx="35" cy="14" rx="17" ry="15" fill="url(#fb)"/><path d="M2 22l15-6 14 7 10-6 9 8-6 2H6z" fill="#b08a60"/><path d="M0 27q10-9 17-9l13 6 12-4 9 6q-10 4-25 3z" fill="#47509c"/><path d="M6 12l4 3M13 5l3 5M36 5l-3 6M45 11l-6 3M21 9l12 9M9 18l5-2M26 8l6 10M40 19l7 1" stroke="#fff3d8" stroke-width="1.500" stroke-dasharray="2 1.500"/></svg></div>
  <div class="apps">
    <span><svg width="30" height="28" viewBox="0 0 30 28"><path d="M0 8h22v20H0z" fill="#6b6b6b"/><path d="M7 0h23v20H7z" fill="#f1f1f1"/><path d="M7 8h15v12H7z" fill="#bdbdbd"/></svg></span>
    <span><svg width="30" height="27" viewBox="0 0 30 27"><path d="M0 2q0-2 2-2h7l4 4h8v8H0z" fill="#e09a05"/><path d="M0 6l11-1 3-2h14q2 0 2 2v21H0z" fill="#fdcb3e"/><path d="M5 27v-6q0-2 2-2h16q2 0 2 2v6z" fill="#0f78d0"/><path d="M9 23h12" stroke="#0a4a90"/></svg></span>
    <span><svg width="30" height="30" viewBox="0 0 30 30"><defs><linearGradient id="eg"><stop offset="0" stop-color="#2ab0e8"/><stop offset=".5" stop-color="#35c9c8"/><stop offset="1" stop-color="#70e83c"/></linearGradient></defs><circle cx="15" cy="15" r="15" fill="#1079d4"/><path d="M0 13Q2 0 16 0q14 2 14 14-1 6-7 6-5 0-4-3 1-7-6-8Q4 8 0 13z" fill="url(#eg)"/><path d="M13 10q-5 4-1 11 5 6 15 3-5 7-14 6-7-3-7-11 1-7 7-9z" fill="#1158a8"/><path d="M18 13q-4 2-2 8 5 4 11 2l3-5q-4 3-8 1t-4-6z" fill="#161f58"/></svg></span>
    <span><svg width="30" height="30" viewBox="0 0 30 30"><path d="M9 6V1h13v5" fill="none" stroke="#1ea5ee" stroke-width="2"/><rect y="5" width="29" height="25" rx="4" fill="#f2f2f2"/><path d="M9 12h5v5H9z" fill="#f25022"/><path d="M15 12h5v5h-5z" fill="#7fba00"/><path d="M9 18h5v5H9z" fill="#00a4ef"/><path d="M15 18h5v5h-5z" fill="#ffb900"/></svg></span>
    <span><svg width="29" height="27"><use href="#copilot"/></svg></span>
    <span><svg width="30" height="30" viewBox="0 0 30 30"><defs><linearGradient id="di"><stop offset="0" stop-color="#ff1a8c"/><stop offset=".5" stop-color="#ff1010"/><stop offset="1" stop-color="#ff9a1a"/></linearGradient></defs><path d="M15 0l15 15-15 15L0 15z" fill="url(#di)"/></svg></span>
    <span class="run lift"><svg width="36" height="36" viewBox="0 0 36 36"><path d="M15 21L2 13.500A15 15 0 0 1 28 13.500z" fill="#e33b2e"/><path d="M15 21L28 13.500A15 15 0 0 1 15 36z" fill="#fbc116"/><path d="M15 21v15A15 15 0 0 1 2 13.500z" fill="#2da94f"/><circle cx="15" cy="21" r="7.500" fill="#fff"/><circle cx="15" cy="21" r="5.800" fill="#2a70e8"/><circle cx="26.500" cy="9.500" r="9" fill="#a5a5a5"/><circle cx="27" cy="7" r="4" fill="#ddd"/><path d="M20 16q1-7 7-5t7 4q-7 6-14 1z" fill="#333"/></svg></span>
    <span><svg width="30" height="30" viewBox="0 0 30 30"><path d="M0 0h30v30H0z" fill="#000"/><path d="M9 23V11q1-4 4-1l4 10q3 3 4-1V7" fill="none" stroke="#e50914" stroke-width="4"/></svg></span>
    <span class="lift"><svg width="38" height="36" viewBox="0 0 38 36"><circle cx="17" cy="21" r="15" fill="#0a9bdc" stroke="#fff" stroke-width="2"/><path d="M11 17q0-6 6-6t6 6q0 3-3 4-3 2-3 4M17 28v4" fill="none" stroke="#fff" stroke-width="4"/><circle cx="28" cy="9.500" r="9.500" fill="#ffc20e"/></svg></span>
    <span><svg width="27" height="27" viewBox="0 0 27 27"><circle cx="13.500" cy="13.500" r="13.500" fill="#2ba0db"/><path d="M5 13l15-6-2.500 13-5-4-3 3v-5z" fill="#fff"/></svg></span>
    <span><svg width="30" height="30" viewBox="0 0 30 30"><path d="M22 0l8 3v24l-8 3L1 11l3-3 18 14z" fill="#1478c4"/><path d="M22 8L4 22l-3-3L22 0z" fill="#0a66ad"/><path d="M22 0l8 3v24l-8 3z" fill="#2aa5ec"/></svg></span>
    <span class="act"><svg width="24" height="30" viewBox="0 0 24 30"><path d="M14 0h10v30H10V0z" fill="#d9980f"/><path d="M6 7h11v23H6z" fill="#f0c23a"/><path d="M0 15h11v15H0z" fill="#fbe38a"/></svg></span>
    <span class="run"><svg width="30" height="28" viewBox="0 0 30 28"><path d="M7 0h23v9H7z" fill="#41a5ee"/><path d="M7 8h23v7H7z" fill="#2b7cd3"/><path d="M7 14h23v14H7z" fill="#185abd"/><rect y="7" width="15" height="15" rx="1" fill="#1450a8"/><path d="M3 11l2 7 2.500-7 2.500 7 2-7" fill="none" stroke="#fff" stroke-width="1.600"/></svg></span>
  </div>
  <svg class="up" width="14" height="9" viewBox="0 0 14 9"><path d="M1 8l6-6 6 6" fill="none" stroke="#fff" stroke-width="1.700"/></svg>
  <div class="lang"><span>ENG</span><span>IN</span></div>
  <svg class="tray" width="80" height="18" viewBox="0 0 80 18" fill="none" stroke="#fff" stroke-width="1.500"><path d="M1 6.500q9-9 18 0M4 10q6-6 12 0M7 13q3-3 6 0"/><circle cx="10" cy="15" r="1.500" fill="#fff"/><path d="M32 6h3l5-5v15l-5-5h-3zM43 5q3 3.500 0 7M46 2.500q5 6 0 12M49 1q6 8 0 16"/><rect x="62" y="3" width="15" height="12" rx="3"/><path d="M64 5.500h11v7H64z" fill="#fff"/><path d="M79 7v4" stroke-width="2"/></svg>
  <div class="clock"><span>00:08</span><span>13-08-2025</span></div>
</footer>
</body>
</html>
```
FILE: styles.css
```css
* { box-sizing: border-box; }
body { margin: 0; width: 1918px; height: 1078px; overflow: hidden; display: flex; flex-direction: column; font-family: "Open Sans", "Noto Sans", sans-serif; font-size: 15px; letter-spacing: -0.03em; color: #252423; background: #f3f2f1; }
h1, h2, h3, h4, h5, p { margin: 0; }
svg { display: block; flex: none; overflow: visible; }
.defs { position: absolute; }
span, a { white-space: nowrap; }

/* title bar */
.titlebar { height: 43px; flex: none; background: #3b3a38; color: #fff; display: flex; align-items: center; padding-left: 20px; }
.tb-icons { margin-right: 2px; }
.doc { width: 343px; padding-top: 5px; letter-spacing: -0.024em; }
.caret { margin-left: 9px; margin-top: 2px; }
.top-search { margin-left: 350px; width: 500px; height: 30px; margin-top: -1px; background: #d4d4d2; border-radius: 2px; display: flex; align-items: center; padding-left: 21px; gap: 15px; font-size: 17.500px; color: #24584e; letter-spacing: -0.04em; }
.top-search svg { color: #3b3a38; }
.signin { margin-left: 314px; width: 46px; margin-top: -2px; letter-spacing: -0.025em; }
.avatar { margin-left: 11px; margin-top: -1px; }
.win { margin-left: 41px; margin-top: 3px; }

/* ribbon */
.ribbon { height: 157px; flex: none; background: #fafafa; box-shadow: 0 1px 5px rgba(0,0,0,.22); position: relative; z-index: 2; }
.menu { display: flex; height: 45px; padding-left: 28px; font-size: 17.500px; position: relative; letter-spacing: -0.03em; }
.menu a { height: 38px; line-height: 39px; }
.m1 { width: 73.500px; } .m2 { width: 47.500px; margin-right: 39px; } .m3 { width: 83px; } .m4 { width: 114px; } .m5 { width: 75px; } .m6 { width: 110px; } .m7 { width: 40px; }
.menu .on { font-weight: 600; letter-spacing: -0.055em; border-bottom: 3px solid #117865; }
.share { margin: 5px 5px 0 auto; width: 105px; height: 30px; border: 0; border-radius: 4px; background: #117865; color: #fff; font: inherit; font-size: 15px; letter-spacing: -0.03em; display: flex; align-items: center; padding: 0 10px 0 9px; justify-content: space-between; }
.share span { margin: -2px 0 0 5px; }
.groups { display: flex; height: 110px; position: relative; }
.grp { border-right: 1px solid #d2d0ce; display: flex; flex-direction: column; justify-content: space-between; }
.grp b { font-weight: 400; font-size: 13.200px; text-align: center; line-height: 14px; letter-spacing: -0.035em; }
.btns { display: flex; justify-content: center; }
.btn { display: flex; flex-direction: column; align-items: center; text-align: center; line-height: 20px; padding-top: 6px; letter-spacing: -0.045em; flex: none; }
.btn svg { height: 40px; margin-bottom: 2px; }
.shift svg { margin-left: 5px; }
.back svg { margin-right: 5px; }
.btn i { display: inline-block; width: 5px; height: 5px; border: solid #3b3a38; border-width: 0 1.700px 1.700px 0; transform: rotate(45deg); margin: 0 2px 3px 4px; }
.dis { color: #c4c2c0; }
.dis b { color: #3b3a38; }
.dis i { border-color: #b5b3b1; }
.fx { font: italic 24px "Liberation Serif", serif; fill: #b5b3b1; stroke: none; }
.w37 { width: 37px; } .w44 { width: 44px; } .w48 { width: 48px; } .w56 { width: 56px; } .w57 { width: 57px; } .w60 { width: 60px; } .w62 { width: 62px; } .w63 { width: 63px; } .w64 { width: 64px; } .w68 { width: 68px; } .w77 { width: 77px; } .w81 { width: 81px; } .w82 { width: 82px; } .w88 { width: 88px; } .w96 { width: 96px; }
.g-clip { width: 201px; }
.g-clip .btns { justify-content: flex-start; padding-left: 16px; }
.paste { width: 38px; }
.mini { margin: 0 0 0 11px; }
.mini div { display: flex; align-items: center; height: 30px; gap: 5px; white-space: nowrap; }
.g-data { width: 449px; } .g-query { width: 145px; } .g-insert { width: 183px; } .g-calc { width: 233px; } .g-calc .btns { padding-left: 1px; } .g-sens { width: 92px; } .g-share { width: 74px; } .g-cop { width: 164px; }
.g-data .btns, .g-query .btns, .g-insert .btns, .g-cop .btns { justify-content: flex-start; }
.g-data .btns { padding-left: 3px; } .g-query .btns { padding-left: 6px; } .g-insert .btns { padding-left: 6px; } .g-cop .btns { padding-left: 6px; }
.collapse { margin: 97px 4px 0 auto; }

/* workspace */
.work { flex: none; height: 790px; display: grid; grid-template-columns: 51px 1166px 251px 226px 224px; grid-template-rows: 746px 44px; }
.rail { grid-row: 1 / 3; border-right: 1px solid #dad8d6; }
.rail div { height: 50px; display: flex; align-items: center; justify-content: center; border-left: 3px solid transparent; padding: 0 2px 2px 0; }
.rail .on { border-color: #117865; }
.railtxt { font: 700 7.500px "Open Sans", sans-serif; fill: #605e5c; stroke: none; }
.stage { background: #fff; }
.report { height: 656px; padding: 29px 0 13px 19px; display: flex; justify-content: space-between; background: linear-gradient(125deg, #070940 0%, #0d0b42 12%, #24123f 35%, #3a163e 55%, #4e1a3a 78%, #55202e 94%, #581f26 100%); box-shadow: 0 3px 10px rgba(0,0,0,.22); }
.blank { height: 90px; }
.left { display: flex; flex-direction: column; justify-content: space-between; width: 830px; }
.visual { background: rgba(180,180,180,.25); border-radius: 13px; box-shadow: inset 0 0 0 1.300px #6b1478; color: #fff; }
.heading { width: 755px; height: 48px; display: flex; justify-content: space-between; margin-bottom: 9px; }
.heading h1 { height: 38px; padding: 10px 0 0 175px; overflow: hidden; font-size: 24px; font-weight: 700; line-height: 33px; letter-spacing: -0.021em; white-space: nowrap; -webkit-text-stroke: .4px #fff; }
.thumb { width: 8px; height: 25px; background: #c8c6c4; margin: 10px 10px 0 0; }
.line1 { height: 258px; }
.line2 { height: 273px; }
.vt { font: 500 15px Roboto, sans-serif; fill: #fff; text-anchor: middle; }
.gl { stroke: #cfc6d2; stroke-width: 1; stroke-dasharray: 1.500 3.500; opacity: .75; }
.fc { fill: #2a6f5c; opacity: .5; }
.ln { fill: none; stroke: #118dff; stroke-width: 9; stroke-linejoin: round; stroke-linecap: round; }
.ax, .tk, .dl { fill: #eeebf0; letter-spacing: -0.5px; }
.ax { font-size: 12px; text-anchor: end; }
.tk { font-size: 10.700px; text-anchor: middle; letter-spacing: 0; }
.dl { font-size: 11px; text-anchor: middle; }
.states { width: 297px; display: flex; flex-direction: column; position: relative; padding-top: 5px; }
.states h2 { font: 500 15px/18px Roboto, sans-serif; text-align: center; letter-spacing: 0.01em; }
.rows { margin-top: 16.500px; display: grid; grid-auto-rows: 18.430px; color: #eeebf0; font-size: 11.400px; letter-spacing: -0.04em; }
.rows div { display: flex; align-items: center; }
.rows span { width: 115px; margin-right: 8px; text-align: right; }
.rows s { height: 15px; background: #d64550; text-decoration: none; text-align: right; display: block; }
.rows em { font-style: normal; margin-left: 7px; line-height: 15px; display: block; }
.rows s em { margin-right: 7px; color: #fff; }
.scale { display: flex; margin: 8px 0 0 89px; font-size: 12px; letter-spacing: -0.05em; color: #eeebf0; }
.scale span { width: 68px; text-align: center; }
.sbar { position: absolute; left: 279px; top: 34px; width: 8px; height: 546px; border-radius: 4px; background: #a59298; }
.sbar span { display: block; height: 323px; border: 1.500px solid #fff; border-radius: 4px; background: #7b6c78; }

/* panes */
.filters { background: #fff; border-left: 1px solid #b3b0ad; grid-row: 1 / 3; grid-column: 3; display: flex; flex-direction: column; }
.ph { display: flex; align-items: center; height: 50px; }
.ph h3 { font-size: 19.500px; font-weight: 600; letter-spacing: -0.038em; margin-top: -2px; }
.ph .chev { margin-left: auto; margin-bottom: 3px; }
.filters .ph { padding: 0 12px 0 15px; }
.fun { margin-right: 9px; }
.eye { margin-left: auto; margin-top: -2px; }
.filters .ph .chev { margin-left: 22px; }
.fsearch { margin: 7px 14px 5px 10px; height: 42px; border: 1px solid #8a8886; border-radius: 2px; display: flex; align-items: center; gap: 13px; padding-left: 13px; font-size: 17.500px; letter-spacing: -0.04em; }
.fsec { border-top: 1px solid #b3b0ad; padding: 20px 10px 0 10px; letter-spacing: -0.028em; }
.fsec p { height: 32px; line-height: 22px; display: flex; justify-content: space-between; align-items: center; padding: 0 4px 12px 0; }
.fsec p svg { margin-top: 6px; }
.fsec.two { border: 0; padding-top: 33px; }
.drop { height: 57px; border: 1px solid #c8c6c4; border-radius: 2px; display: flex; align-items: center; justify-content: center; }
.viz { grid-row: 1 / 3; grid-column: 4; border-left: 1px solid #dad8d6; border-right: 1px solid #dad8d6; }
.viz .ph { padding: 0 9px 0 10px; }
h4 { font-size: 15px; font-weight: 600; line-height: 16px; height: 17px; margin-top: -1px; padding-left: 10px; letter-spacing: -0.04em; }
.modes { display: flex; align-items: center; padding: 6px 0 0 10px; }
.sel { width: 40px; height: 40px; background: #d2d0ce; border-radius: 3px; display: flex; align-items: center; justify-content: center; }
.brush { margin-left: 48px; }
.notch { margin-top: 5px; margin-left: -1px; }
.vgrid { display: grid; grid-template-columns: repeat(6, 35px); grid-auto-rows: 35px; padding: 14px 0 0 14px; height: 294px; border-bottom: 1px solid #dad8d6; }
.vgrid svg { width: 24px; height: 24px; }
.ln0 { fill: none; stroke: #3b3a38; stroke-width: 1.500; }
.gl0 { fill: none; stroke: #7a7876; stroke-width: 1.200; }
.bl { fill: none; stroke: #1f83c8; stroke-width: 1.500; }
.w { fill: #fff; stroke: #3b3a38; stroke-width: 1.400; }
.b { fill: #83bdea; stroke: #1068b3; stroke-width: 1.300; }
.g { fill: #c8c6c4; stroke: #7a7876; stroke-width: 1.300; }
.o { fill: #fbc97a; stroke: #d86a10; stroke-width: 1.300; }
.n123 { font-size: 11px; fill: #2b88d8; text-anchor: middle; letter-spacing: 0; }
.rt { font-size: 20px; font-weight: 700; fill: #1f83c8; text-anchor: middle; letter-spacing: -1px; }
.wells { padding: 10px 7px 0 5px; letter-spacing: -0.025em; }
.wells p { line-height: 20px; padding-left: 10px; }
.well { height: 36px; margin-top: 7px; background: #fff; border: 1px dashed #c0bebc; display: flex; align-items: center; padding: 0 0 2px 13px; border-radius: 2px; white-space: nowrap; }
.well.d { height: 33px; margin-top: 12px; padding-left: 10px; letter-spacing: -0.02em; }
h5 { font-size: 15px; font-weight: 600; color: #484644; padding: 12px 0 0 10px; line-height: 20px; letter-spacing: -0.03em; }
.tog { display: flex; justify-content: space-between; align-items: center; height: 20px; padding: 0 20px 0 10px; margin-top: 12px; letter-spacing: -0.028em; }
.tog.k { margin-top: 14px; }
.tog span { width: 40px; height: 20px; border-radius: 10px; display: flex; align-items: center; justify-content: space-between; padding: 0 5px; font-size: 12px; }
.tog i { width: 10px; height: 10px; border-radius: 5px; }
.off { background: #fff; border: 1px solid #8a8886; color: #605e5c; }
.off i { background: #605e5c; }
.ont { background: #117865; color: #fff; }
.ont i { background: #fff; }
.data { grid-row: 1 / 3; grid-column: 5; letter-spacing: -0.035em; }
.data .ph { padding: 0 8px 0 12px; }
.dsearch { margin: 7px 3px 10px 6px; height: 31px; background: #fff; border: 1px solid #d2d0ce; border-bottom-color: #605e5c; border-radius: 4px; display: flex; align-items: center; gap: 8px; padding-left: 14px; font-size: 17.500px; color: #707070; letter-spacing: -0.03em; }
.tbl { display: flex; align-items: center; height: 30px; padding-left: 20px; color: #323130; }
.tbl svg + svg { margin: 0 4px 0 9px; }

/* page tabs */
.pages { grid-row: 2; grid-column: 2; background: #f3f2f1; display: flex; letter-spacing: -0.045em; }
.pg { width: 95px; border-left: 1px solid #a19f9d; background: #fff; display: flex; align-items: center; justify-content: center; }
.cur { width: 97px; font-weight: 600; border-bottom: 5px solid #117865; padding-top: 5px; border-left-color: #c8c6c4; }
.add { width: 50px; background: #117865; display: flex; align-items: center; justify-content: center; padding-bottom: 3px; }

/* status bar */
.status { height: 29px; flex: none; border-top: 1px solid #dad8d6; background: #f3f2f1; display: flex; align-items: center; padding: 1px 20px 0 5px; color: #484644; letter-spacing: -0.035em; }
.status span:first-child { margin-right: auto; padding-top: 1px; }
.pct { margin: -2px 24px 0 14px; width: 29px; color: #605e5c; letter-spacing: -0.06em; }

/* task bar */
.taskbar { height: 59px; flex: none; border-top: 1px solid #000; color: #fff; display: flex; align-items: center; padding: 3px 22px 0 25px; background: linear-gradient(90deg, #1d232b 0, #1d232b 310px, #13234e 400px, #141f5c 560px, #13224e 760px, #141f5a 880px, #1c1f45 1000px, #211f3c 1080px, #142150 1180px, #12245c 1240px, #1c2336 1360px, #1d222b 1480px); letter-spacing: -0.02em; }
.badge { font-size: 14px; fill: #222; text-anchor: middle; }
.wx { margin-top: -4px; }
.wtext { margin: -4px 0 0 5px; width: 383px; }
.wtext span, .lang span, .clock span { display: block; line-height: 20px; }
.wtext span + span { color: #c8cbd0; letter-spacing: -0.008em; }
.tsearch { width: 275px; height: 40px; border-radius: 20px; margin-left: 17px; background: rgba(255,255,255,.15); box-shadow: inset 0 0 0 1px rgba(255,255,255,.12); display: flex; align-items: center; padding: 0 11px 0 15px; font-size: 17px; color: #dcdfeb; letter-spacing: -0.03em; }
.tsearch span { margin: 0 auto 0 12px; }
.apps { display: flex; margin-left: 2px; }
.apps span { width: 55px; height: 50px; display: flex; align-items: center; justify-content: center; position: relative; }
.apps .lift { padding: 0 0 5px 4px; }
.run::after, .act::after { content: ""; position: absolute; left: 23px; bottom: 0; width: 8px; height: 4px; border-radius: 2px; background: #9a9ca4; }
.apps .act { width: 49px; margin: 0 3px; background: rgba(255,255,255,.08); box-shadow: inset 0 0 0 1px rgba(255,255,255,.06); border-radius: 5px; }
.act::after { left: 15px; width: 20px; background: #dd9be0; }
.up { margin-left: 141px; }
.lang { width: 60px; margin: -3px 0 0 11px; text-align: center; }
.tray { margin-left: 6px; }
.clock { margin: -3px 0 0 auto; text-align: right; letter-spacing: 0; }
```
